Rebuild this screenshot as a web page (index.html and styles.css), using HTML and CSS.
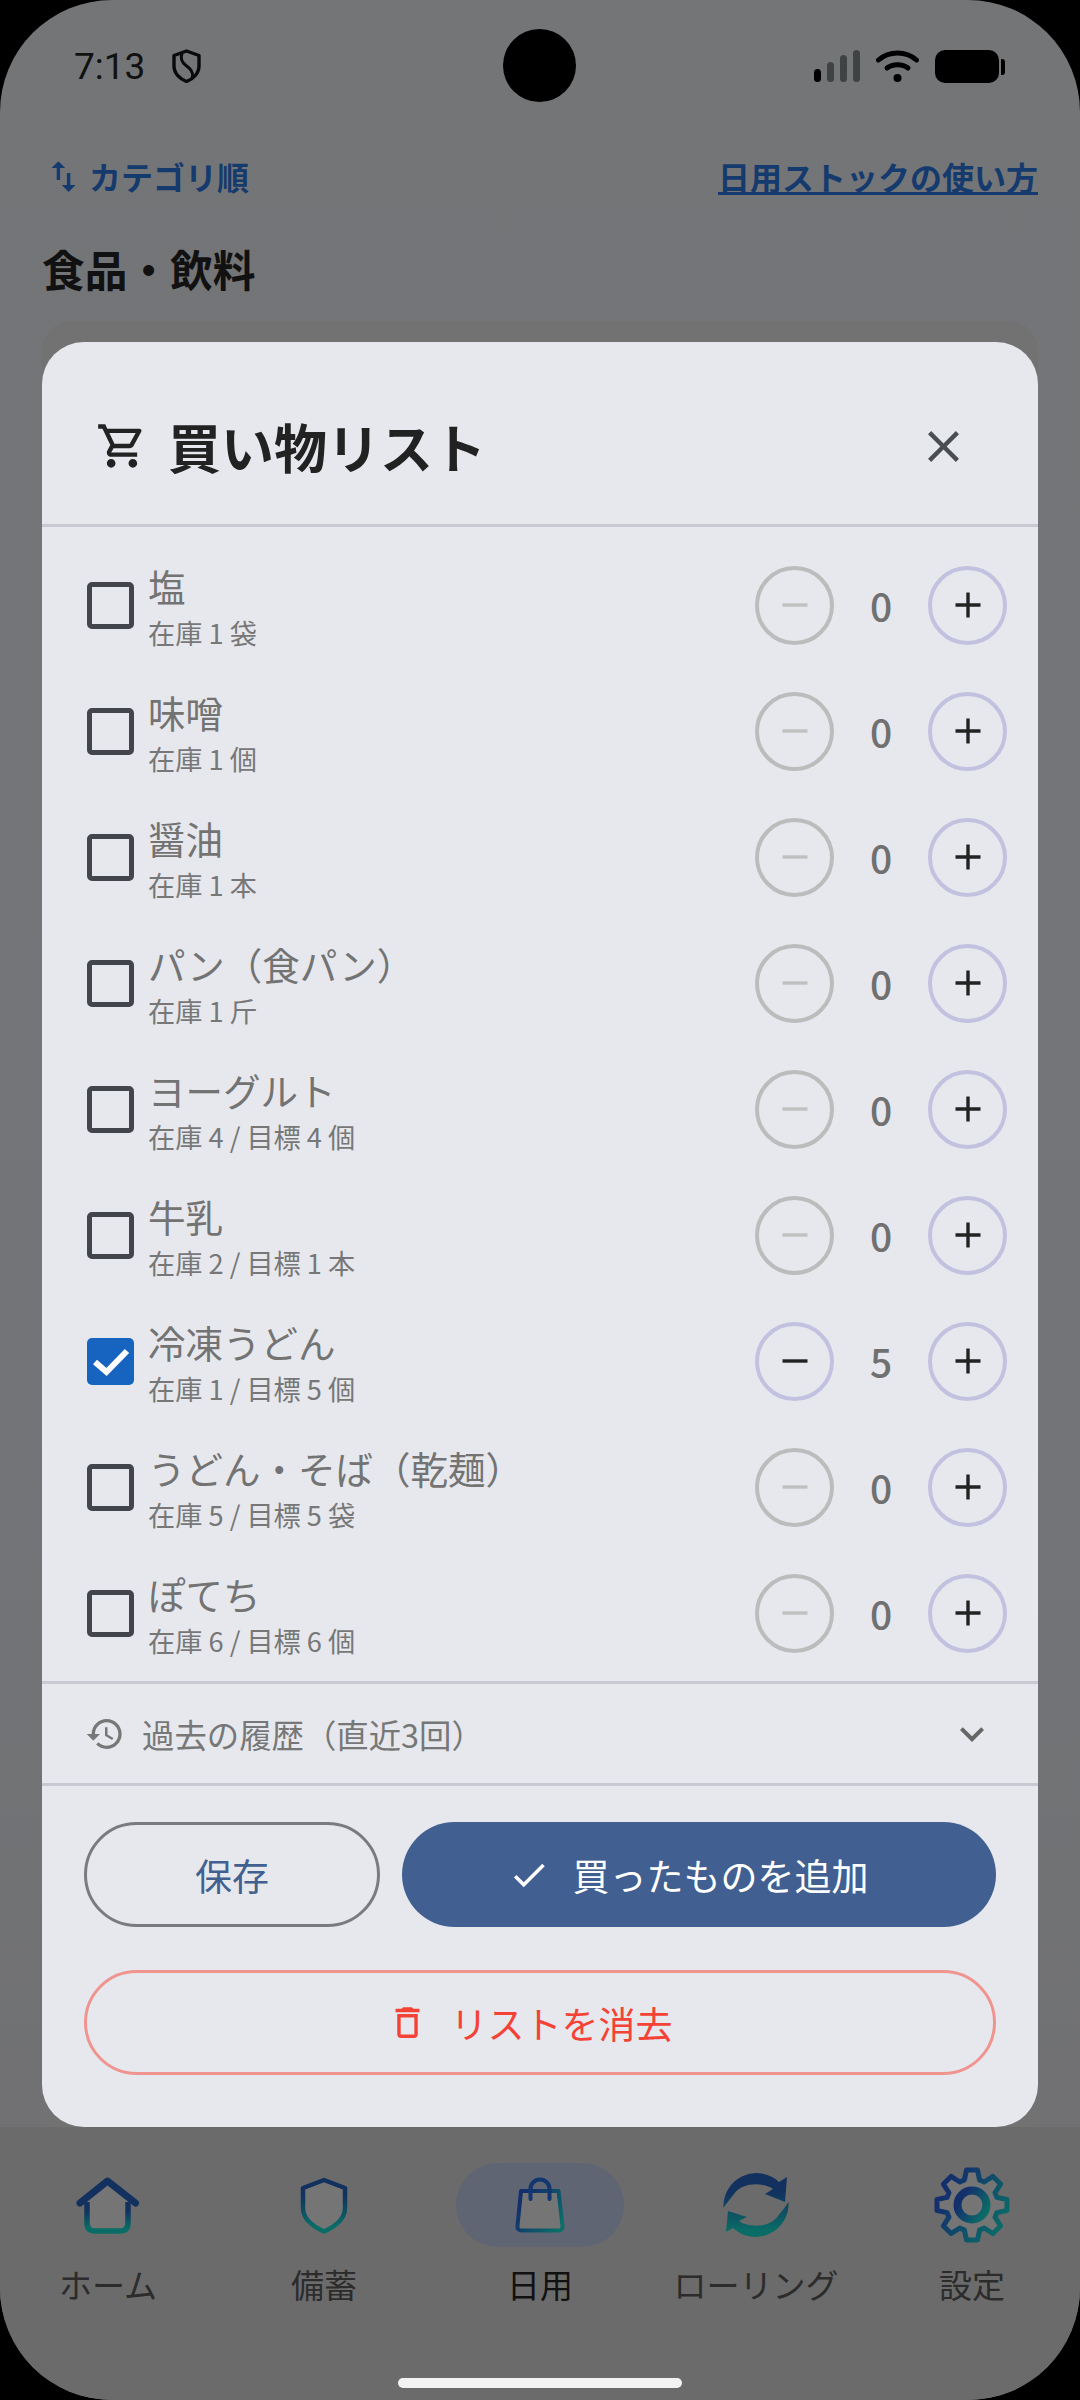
FILE: index.html
```html
<!DOCTYPE html>
<html lang="ja">
<head>
    <meta charset="UTF-8">
    <meta name="viewport" content="width=device-width, initial-scale=1.0">
    <title>買い物リスト</title>
    <link rel="stylesheet" href="styles.css">
</head>
<body>
    <svg class="icon-defs" aria-hidden="true">
        <defs>
            <linearGradient id="grad-v" x1="0" y1="0" x2="0" y2="1">
                <stop offset="0.3" stop-color="#12315f"/>
                <stop offset="0.9" stop-color="#0a6c66"/>
            </linearGradient>
            <linearGradient id="grad-d" x1="0" y1="0.2" x2="1" y2="0.8">
                <stop offset="0.15" stop-color="#13306c"/>
                <stop offset="1" stop-color="#0b6e68"/>
            </linearGradient>
            <symbol id="i-plus" viewBox="0 0 26 26"><path d="M0.5 13H25.5M13 0.5V25.5" fill="none" stroke="currentColor" stroke-width="3.4"/></symbol>
            <symbol id="i-minus" viewBox="0 0 26 26"><path d="M0.5 13H25.5" fill="none" stroke="currentColor" stroke-width="3.4"/></symbol>
        </defs>
    </svg>

    <div class="screen">
        <div class="status-bar">
            <div class="status-left">
                <span class="status-time">7:13</span>
                <svg class="status-shield" viewBox="0 0 29 34">
                    <path d="M14.5 2L27 6.5V17C27 24.5 21 30 14.5 32.5C8 30 2 24.5 2 17V6.5Z" fill="none" stroke="#0a0a0a" stroke-width="3.4" stroke-linejoin="round"/>
                    <path d="M10 4.5C8 10 10 13.5 14 16.5C18 19.5 21 22 20.5 28" fill="none" stroke="#0a0a0a" stroke-width="3"/>
                </svg>
            </div>
            <div class="status-right">
                <div class="signal">
                    <span class="bar bar-1"></span>
                    <span class="bar bar-2"></span>
                    <span class="bar bar-3"></span>
                    <span class="bar bar-4"></span>
                </div>
                <svg class="wifi" viewBox="0 0 43 32">
                    <path d="M2.5 10C13 0.5 30 0.5 40.500 10" fill="none" stroke="#000" stroke-width="5" stroke-linecap="round"/>
                    <path d="M11 18C16.500 13.500 26.500 13.500 32 18" fill="none" stroke="#000" stroke-width="5" stroke-linecap="round"/>
                    <circle cx="21.500" cy="28" r="4" fill="#000"/>
                </svg>
                <div class="battery"><span class="battery-nub"></span></div>
            </div>
        </div>
        <div class="camera"></div>

        <div class="toolbar">
            <div class="sort-btn">
                <svg class="sort-icon" viewBox="0 0 24 24"><path d="M16 17.010V10h-2v7.010h-3L15 21l4-3.990h-3zM9 3L5 6.990h3V14h2V6.990h3L9 3z"/></svg>
                <span>カテゴリ順</span>
            </div>
            <a class="help-link">日用ストックの使い方</a>
        </div>
        <h2 class="section-title">食品・飲料</h2>
        <div class="section-card"></div>

        <nav class="bottom-nav">
            <div class="nav-items">
                <div class="nav-item">
                    <div class="nav-icon">
                        <svg width="64" height="57" viewBox="0 0 64 57">
                            <path d="M11 24L31.500 6L52 24V46Q52 54 44 54H19Q11 54 11 46Z" fill="#757575"/>
                            <path d="M11 25V46Q11 54 19 54H44Q52 54 52 46V25" fill="none" stroke="url(#grad-v)" stroke-width="5.500"/>
                            <path d="M4 26L31.500 4L59.500 26" fill="none" stroke="#12315f" stroke-width="7" stroke-linecap="round" stroke-linejoin="round"/>
                        </svg>
                    </div>
                    <span class="nav-label">ホーム</span>
                </div>
                <div class="nav-item">
                    <div class="nav-icon">
                        <svg width="48" height="57" viewBox="0 0 48 57">
                            <path d="M24 3L45 11V31C45 42 34 50 24 54.500C14 50 3 42 3 31V11Z" fill="#757575" stroke="url(#grad-v)" stroke-width="4.500" stroke-linejoin="round"/>
                        </svg>
                    </div>
                    <span class="nav-label">備蓄</span>
                </div>
                <div class="nav-item nav-item-active">
                    <div class="nav-icon">
                        <svg width="52" height="57" viewBox="0 0 52 57">
                            <path d="M7 14H44.500L48.500 49Q49 53.500 44 53.500H8Q3 53.500 3.500 49Z" fill="#757575" stroke="url(#grad-d)" stroke-width="4" stroke-linejoin="round"/>
                            <path d="M16.500 22V12A9.500 9.500 0 0 1 35.500 12V22" fill="none" stroke="#123670" stroke-width="4" stroke-linecap="round"/>
                        </svg>
                    </div>
                    <span class="nav-label">日用</span>
                </div>
                <div class="nav-item">
                    <div class="nav-icon">
                        <svg width="66" height="66" viewBox="0 0 66 66">
                            <path fill="url(#grad-v)" d="M0.500 36A33 33 0 0 1 56 10L64 5L62 30L42 22L50 17C42 11 20 9 11 22C7 27 3 32 0.500 36ZM65.500 30A33 33 0 0 1 10 56L3 60L5 39L24 45L16 49C24 55 46 57 55 44C59 39 63 34 65.500 30Z"/>
                        </svg>
                    </div>
                    <span class="nav-label">ローリング</span>
                </div>
                <div class="nav-item">
                    <div class="nav-icon">
                        <svg width="76" height="76" viewBox="-38 -38 76 76">
                            <path fill="#757575" stroke="url(#grad-d)" stroke-width="5" stroke-linejoin="round" d="M-7.600 -24.900L-5.500 -35H5.500L7.600 -24.900A26 26 0 0 1 12.200 -23L20.900 -28.600L28.600 -20.900L23 -12.200A26 26 0 0 1 24.900 -7.600L35 -5.500V5.500L24.900 7.600A26 26 0 0 1 23 12.200L28.600 20.900L20.900 28.600L12.200 23A26 26 0 0 1 7.600 24.900L5.500 35H-5.500L-7.600 24.900A26 26 0 0 1 -12.200 23L-20.900 28.600L-28.600 20.900L-23 12.200A26 26 0 0 1 -24.900 7.600L-35 5.500V-5.500L-24.900 -7.600A26 26 0 0 1 -23 -12.200L-28.600 -20.900L-20.900 -28.600L-12.200 -23A26 26 0 0 1 -7.600 -24.900Z"/>
                            <circle cx="0" cy="0" r="14.500" fill="none" stroke="url(#grad-d)" stroke-width="8"/>
                        </svg>
                    </div>
                    <span class="nav-label">設定</span>
                </div>
            </div>
            <div class="home-bar"></div>
        </nav>

        <div class="modal">
            <div class="modal-header">
                <svg class="cart-icon" viewBox="0 0 24 24"><path d="M15.550 13c.75 0 1.410-.41 1.750-1.030l3.580-6.490c.37-.66-.11-1.480-.87-1.480H5.210l-.94-2H1v2h2l3.600 7.590-1.350 2.440C4.520 15.370 5.480 17 7 17h12v-2H7l1.100-2h7.450zM6.160 6h12.150l-2.760 5H8.530L6.160 6zM7 18c-1.100 0-1.990.9-1.990 2S5.900 22 7 22s2-.9 2-2-.9-2-2-2zm10 0c-1.100 0-1.990.9-1.990 2s.89 2 1.990 2 2-.9 2-2-.9-2-2-2z"/></svg>
                <h1 class="modal-title">買い物リスト</h1>
                <svg class="close-icon" viewBox="0 0 24 24"><path d="M19 6.410L17.590 5 12 10.590 6.410 5 5 6.410 10.590 12 5 17.590 6.410 19 12 13.410 17.590 19 19 17.590 13.410 12z"/></svg>
            </div>

            <div class="item-list">
                <div class="item-row">
                    <span class="checkbox"></span>
                    <div class="item-text"><div class="item-name">塩</div><div class="item-sub">在庫 1 袋</div></div>
                    <div class="stepper">
                        <span class="step-btn step-off"><svg><use href="#i-minus"/></svg></span>
                        <span class="step-count">0</span>
                        <span class="step-btn"><svg><use href="#i-plus"/></svg></span>
                    </div>
                </div>
                <div class="item-row">
                    <span class="checkbox"></span>
                    <div class="item-text"><div class="item-name">味噌</div><div class="item-sub">在庫 1 個</div></div>
                    <div class="stepper">
                        <span class="step-btn step-off"><svg><use href="#i-minus"/></svg></span>
                        <span class="step-count">0</span>
                        <span class="step-btn"><svg><use href="#i-plus"/></svg></span>
                    </div>
                </div>
                <div class="item-row">
                    <span class="checkbox"></span>
                    <div class="item-text"><div class="item-name">醤油</div><div class="item-sub">在庫 1 本</div></div>
                    <div class="stepper">
                        <span class="step-btn step-off"><svg><use href="#i-minus"/></svg></span>
                        <span class="step-count">0</span>
                        <span class="step-btn"><svg><use href="#i-plus"/></svg></span>
                    </div>
                </div>
                <div class="item-row">
                    <span class="checkbox"></span>
                    <div class="item-text"><div class="item-name">パン（食パン）</div><div class="item-sub">在庫 1 斤</div></div>
                    <div class="stepper">
                        <span class="step-btn step-off"><svg><use href="#i-minus"/></svg></span>
                        <span class="step-count">0</span>
                        <span class="step-btn"><svg><use href="#i-plus"/></svg></span>
                    </div>
                </div>
                <div class="item-row">
                    <span class="checkbox"></span>
                    <div class="item-text"><div class="item-name">ヨーグルト</div><div class="item-sub">在庫 4 / 目標 4 個</div></div>
                    <div class="stepper">
                        <span class="step-btn step-off"><svg><use href="#i-minus"/></svg></span>
                        <span class="step-count">0</span>
                        <span class="step-btn"><svg><use href="#i-plus"/></svg></span>
                    </div>
                </div>
                <div class="item-row">
                    <span class="checkbox"></span>
                    <div class="item-text"><div class="item-name">牛乳</div><div class="item-sub">在庫 2 / 目標 1 本</div></div>
                    <div class="stepper">
                        <span class="step-btn step-off"><svg><use href="#i-minus"/></svg></span>
                        <span class="step-count">0</span>
                        <span class="step-btn"><svg><use href="#i-plus"/></svg></span>
                    </div>
                </div>
                <div class="item-row">
                    <span class="checkbox checkbox-on">
                        <svg viewBox="0 0 47 47"><path d="M8 24L19.500 34L40 13" fill="none" stroke="#fff" stroke-width="6"/></svg>
                    </span>
                    <div class="item-text"><div class="item-name">冷凍うどん</div><div class="item-sub">在庫 1 / 目標 5 個</div></div>
                    <div class="stepper">
                        <span class="step-btn"><svg><use href="#i-minus"/></svg></span>
                        <span class="step-count">5</span>
                        <span class="step-btn"><svg><use href="#i-plus"/></svg></span>
                    </div>
                </div>
                <div class="item-row">
                    <span class="checkbox"></span>
                    <div class="item-text"><div class="item-name">うどん・そば（乾麺）</div><div class="item-sub">在庫 5 / 目標 5 袋</div></div>
                    <div class="stepper">
                        <span class="step-btn step-off"><svg><use href="#i-minus"/></svg></span>
                        <span class="step-count">0</span>
                        <span class="step-btn"><svg><use href="#i-plus"/></svg></span>
                    </div>
                </div>
                <div class="item-row">
                    <span class="checkbox"></span>
                    <div class="item-text"><div class="item-name">ぽてち</div><div class="item-sub">在庫 6 / 目標 6 個</div></div>
                    <div class="stepper">
                        <span class="step-btn step-off"><svg><use href="#i-minus"/></svg></span>
                        <span class="step-count">0</span>
                        <span class="step-btn"><svg><use href="#i-plus"/></svg></span>
                    </div>
                </div>
            </div>

            <div class="history-row">
                <svg class="history-icon" viewBox="0 0 24 24"><path d="M13 3c-4.970 0-9 4.030-9 9H1l3.890 3.890.07.14L9 12H6c0-3.870 3.130-7 7-7s7 3.130 7 7-3.130 7-7 7c-1.930 0-3.680-.79-4.940-2.060l-1.420 1.420C8.270 19.990 10.510 21 13 21c4.970 0 9-4.030 9-9s-4.030-9-9-9zm-1 5v5l4.280 2.540.72-1.210-3.500-2.080V8H12z"/></svg>
                <span class="history-text">過去の履歴（直近3回）</span>
                <svg class="chevron-icon" viewBox="0 0 24 24"><path d="M16.590 8.590L12 13.170 7.410 8.590 6 10l6 6 6-6z"/></svg>
            </div>

            <div class="actions">
                <div class="action-row">
                    <button class="btn btn-save">保存</button>
                    <button class="btn btn-add">
                        <svg viewBox="0 0 24 24"><path d="M9 16.170L4.830 12l-1.420 1.410L9 19 21 7l-1.410-1.410z"/></svg>
                        <span>買ったものを追加</span>
                    </button>
                </div>
                <button class="btn btn-clear">
                    <svg viewBox="0 0 24 24"><path d="M6 19c0 1.100.9 2 2 2h8c1.100 0 2-.9 2-2V7H6v12zM8 9h8v10H8V9zm7.500-5l-1-1h-5l-1 1H5v2h14V4z"/></svg>
                    <span>リストを消去</span>
                </button>
            </div>
        </div>
    </div>
</body>
</html>
```

FILE: styles.css
```css
* {
    box-sizing: border-box;
}

body {
    margin: 0;
    background-color: #000;
    font-family: "Noto Sans CJK JP", "Noto Sans", sans-serif;
}

.icon-defs {
    position: absolute;
    width: 0;
    height: 0;
}

.screen {
    position: relative;
    display: flex;
    flex-direction: column;
    width: 1080px;
    height: 2400px;
    overflow: hidden;
    border-radius: 112px;
    background: linear-gradient(#747577, #737477 60%, #707072);
}

/* status bar */
.status-bar {
    display: flex;
    align-items: center;
    justify-content: space-between;
    height: 132px;
    padding: 0 75px 0 74px;
}

.status-left,
.status-right {
    display: flex;
    align-items: center;
}

.status-time {
    font-family: Roboto, sans-serif;
    font-size: 37px;
    color: #111;
}

.status-shield {
    width: 29px;
    height: 34px;
    margin-left: 27px;
}

.signal {
    display: flex;
    align-items: flex-end;
    gap: 6px;
    height: 32px;
}

.bar {
    width: 7px;
    border-radius: 4px;
    background-color: #3f4343;
}

.bar-1 {
    height: 13px;
    background-color: #000;
}

.bar-2 {
    height: 20px;
}

.bar-3 {
    height: 27px;
}

.bar-4 {
    height: 32px;
}

.wifi {
    width: 43px;
    height: 32px;
    margin-left: 16px;
}

.battery {
    position: relative;
    width: 64px;
    height: 33px;
    margin-left: 16px;
    margin-right: 6px;
    border-radius: 10px;
    background-color: #000;
}

.battery-nub {
    position: absolute;
    top: 9px;
    right: -6px;
    width: 4px;
    height: 16px;
    border-radius: 0 3px 3px 0;
    background-color: #000;
}

.camera {
    position: absolute;
    top: 29px;
    left: 503px;
    width: 73px;
    height: 73px;
    border-radius: 50%;
    background-color: #000;
}

/* page behind the dialog */
.toolbar {
    display: flex;
    align-items: center;
    justify-content: space-between;
    height: 88px;
    padding: 0 42px 0 43px;
}

.sort-btn {
    display: flex;
    align-items: center;
    gap: 5px;
    font-size: 32px;
    font-weight: 700;
    color: #153a6d;
}

.sort-icon {
    width: 41px;
    height: 41px;
    fill: #153a6d;
}

.help-link {
    font-size: 32px;
    font-weight: 700;
    color: #153a6d;
    text-decoration: underline;
}

.section-title {
    height: 60px;
    margin: 18px 0 23px 42px;
    font-size: 42.7px;
    line-height: 60px;
    font-weight: 700;
    color: #111;
}

.section-card {
    flex: 1;
    margin: 0 42px;
    border-radius: 30px 30px 0 0;
    background-color: #727272;
}

/* bottom nav */
.bottom-nav {
    height: 273px;
    padding-top: 36px;
    background-color: #6b6b6b;
}

.nav-items {
    display: grid;
    grid-template-columns: repeat(5, 1fr);
}

.nav-item {
    display: flex;
    flex-direction: column;
    align-items: center;
}

.nav-icon {
    display: flex;
    align-items: center;
    justify-content: center;
    width: 168px;
    height: 84px;
    border-radius: 42px;
}

.nav-item-active .nav-icon {
    background-color: #5f6573;
}

.nav-label {
    margin-top: 13px;
    font-size: 33px;
    line-height: 48px;
    color: #2c2c2c;
}

.nav-item-active .nav-label {
    color: #111;
}

.home-bar {
    width: 284px;
    height: 10px;
    margin: 70px auto 0;
    border-radius: 5px;
    background-color: #f3f3f3;
}

/* dialog */
.modal {
    position: absolute;
    top: 342px;
    left: 42px;
    display: flex;
    flex-direction: column;
    width: 996px;
    height: 1785px;
    border-radius: 42px;
    background-color: #e6e8ed;
}

.modal-header {
    display: flex;
    align-items: center;
    height: 185px;
    padding: 26px 68px 0 54px;
    border-bottom: 3px solid #c8c9d3;
}

.cart-icon {
    width: 52px;
    height: 52px;
    fill: #222;
}

.modal-title {
    flex: 1;
    margin: 0 0 0 20px;
    font-size: 53px;
    font-weight: 700;
    color: #222;
}

.close-icon {
    width: 53px;
    height: 53px;
    fill: #4a4d52;
}

.item-list {
    padding: 15px 0 5px;
    border-bottom: 3px solid #c8c9d3;
}

.item-row {
    display: flex;
    align-items: center;
    height: 126px;
    padding: 0 31px 0 45px;
}

.checkbox {
    flex: none;
    width: 47px;
    height: 47px;
    border: 5px solid #42454b;
    border-radius: 5px;
}

.checkbox-on {
    border: none;
    background-color: #1664c0;
}

.checkbox-on svg {
    display: block;
    width: 47px;
    height: 47px;
}

.item-text {
    flex: 1;
    margin-left: 14px;
    padding-top: 4px;
}

.item-name {
    font-size: 37.5px;
    line-height: 50px;
    color: #737373;
}

.item-sub {
    font-size: 27.2px;
    line-height: 42px;
    color: #777;
}

.stepper {
    display: flex;
    align-items: center;
}

.step-btn {
    display: flex;
    align-items: center;
    justify-content: center;
    width: 79px;
    height: 79px;
    border: 4px solid #c3c1e0;
    border-radius: 50%;
    color: #222;
}

.step-btn svg {
    width: 26px;
    height: 26px;
}

.step-off {
    border-color: #bcbcbc;
    color: #c0c0c0;
}

.step-count {
    width: 94px;
    font-size: 39px;
    line-height: 79px;
    font-weight: 500;
    text-align: center;
    color: #707070;
}

.history-row {
    display: flex;
    align-items: center;
    height: 99px;
    padding: 0 42px 0 43px;
    border-bottom: 3px solid #c8c9d3;
    box-sizing: content-box;
}

.history-icon {
    width: 40px;
    height: 40px;
    fill: #777;
}

.history-text {
    flex: 1;
    margin-left: 17px;
    font-size: 32.4px;
    color: #777;
}

.chevron-icon {
    width: 48px;
    height: 48px;
    fill: #666;
}

.actions {
    padding: 36px 42px 0;
}

.action-row {
    display: flex;
    gap: 22px;
    margin-bottom: 43px;
}

.btn {
    display: flex;
    align-items: center;
    justify-content: center;
    height: 105px;
    border-radius: 53px;
    font-family: inherit;
    font-size: 37px;
}

.btn svg {
    flex: none;
}

.btn-save {
    width: 296px;
    border: 3px solid #7a7b7f;
    background: none;
    color: #41608f;
}

.btn-add {
    flex: 1;
    gap: 23px;
    padding: 0 22px 0 0;
    border: none;
    background-color: #415f90;
    color: #fff;
}

.btn-add svg {
    width: 42px;
    height: 42px;
    fill: #fff;
}

.btn-clear {
    gap: 23px;
    width: 100%;
    padding: 0 21px 0 0;
    border: 3px solid #f0948f;
    background: none;
    color: #f44336;
}

.btn-clear svg {
    width: 41px;
    height: 41px;
    fill: #f44336;
}
```
